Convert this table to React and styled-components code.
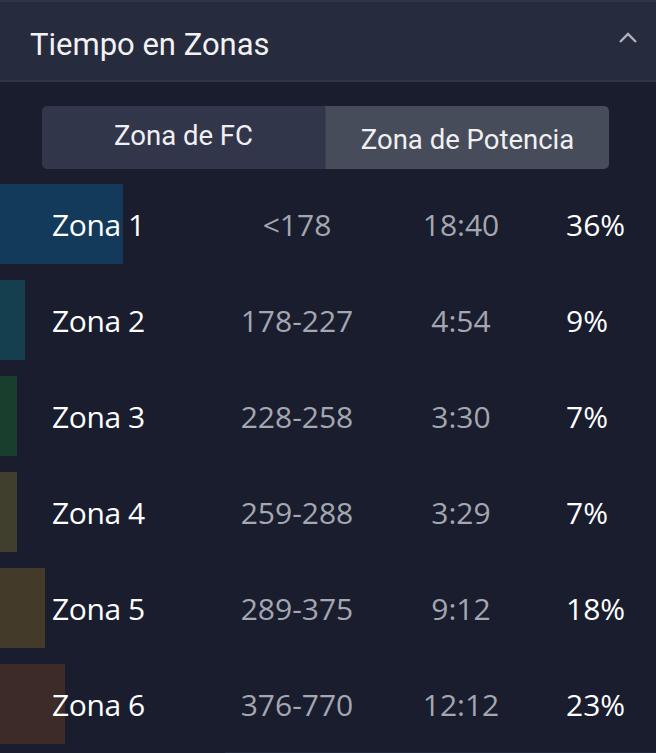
import React from 'react';
import styled, { createGlobalStyle } from 'styled-components';

const GlobalStyle = createGlobalStyle`
  html, body {
    margin: 0;
    padding: 0;
    background: #191d2e;
  }
`;

const zones = [
  { name: 'Zona 1', range: '<178', time: '18:40', pct: '36%', color: '#133a5a', width: 123 },
  { name: 'Zona 2', range: '178-227', time: '4:54', pct: '9%', color: '#153f4f', width: 25 },
  { name: 'Zona 3', range: '228-258', time: '3:30', pct: '7%', color: '#1a3e2e', width: 17 },
  { name: 'Zona 4', range: '259-288', time: '3:29', pct: '7%', color: '#403e2d', width: 17 },
  { name: 'Zona 5', range: '289-375', time: '9:12', pct: '18%', color: '#433a2a', width: 45 },
  { name: 'Zona 6', range: '376-770', time: '12:12', pct: '23%', color: '#3d2b27', width: 65 },
];

function App() {
  return (
    <>
      <GlobalStyle />
      <Panel>
        <Header>
          <Title>Tiempo en Zonas</Title>
          <Chevron width="20" height="12" viewBox="0 0 20 12">
            <polyline points="2,10 10,2 18,10" fill="none" stroke="#aeb2bc" strokeWidth="2.4" />
          </Chevron>
        </Header>
        <Body>
          <Tabs>
            <Tab>Zona de FC</Tab>
            <Tab $active>Zona de Potencia</Tab>
          </Tabs>
          <List>
            {zones.map((z) => (
              <Row key={z.name} $color={z.color} $width={z.width}>
                <Name>{z.name}</Name>
                <Muted>{z.range}</Muted>
                <Muted>{z.time}</Muted>
                <Pct>{z.pct}</Pct>
              </Row>
            ))}
          </List>
          <Divider />
        </Body>
      </Panel>
    </>
  );
}

const Panel = styled.div`
  width: 656px;
  height: 753px;
  background: #191d2e;
  overflow: hidden;
`;

const Header = styled.div`
  box-sizing: border-box;
  height: 82px;
  border-top: 2px solid #30354a;
  border-bottom: 2px solid #30354a;
  background: #262b3d;
  display: flex;
  align-items: center;
  justify-content: space-between;
  padding: 0 18px 0 30px;
`;

const Title = styled.div`
  font-family: Roboto, "Liberation Sans", sans-serif;
  font-size: 31px;
  color: #f2f2f4;
  padding-top: 6px;
`;

const Chevron = styled.svg`
  margin-bottom: 6px;
`;

const Body = styled.div`
  padding-top: 24px;
`;

const Tabs = styled.div`
  margin: 0 47px 0 42px;
  height: 63px;
  display: grid;
  grid-template-columns: 283px 1fr;
  border-radius: 5px;
  overflow: hidden;
`;

const Tab = styled.div`
  display: flex;
  align-items: center;
  justify-content: center;
  font-family: Roboto, "Liberation Sans", sans-serif;
  font-size: 27.5px;
  color: #f0f0f2;
  background: ${(p) => (p.$active ? '#474c5b' : '#31364a')};
  padding-top: ${(p) => (p.$active ? '4px' : '0')};
  padding-bottom: ${(p) => (p.$active ? '0' : '4px')};
  border-left: ${(p) => (p.$active ? '1px solid #3c4152' : 'none')};
`;

const List = styled.div`
  margin-top: 15px;
  display: flex;
  flex-direction: column;
  gap: 16px;
`;

const Row = styled.div`
  height: 80px;
  display: grid;
  grid-template-columns: 145px 200px 128px 1fr;
  align-items: center;
  padding-left: 52px;
  background: linear-gradient(
    to right,
    ${(p) => p.$color} ${(p) => p.$width}px,
    transparent ${(p) => p.$width}px
  );
  font-family: "Open Sans", "DejaVu Sans", sans-serif;
  font-size: 30px;
`;

const Name = styled.div`
  color: #ffffff;
  letter-spacing: -0.4px;
`;

const Muted = styled.div`
  color: #a4a7b0;
  text-align: center;
`;

const Pct = styled.div`
  color: #ffffff;
  padding-left: 41px;
`;

const Divider = styled.div`
  margin: 8px 0 0 225px;
  height: 2px;
  background: #23283a;
`;

export default App;
